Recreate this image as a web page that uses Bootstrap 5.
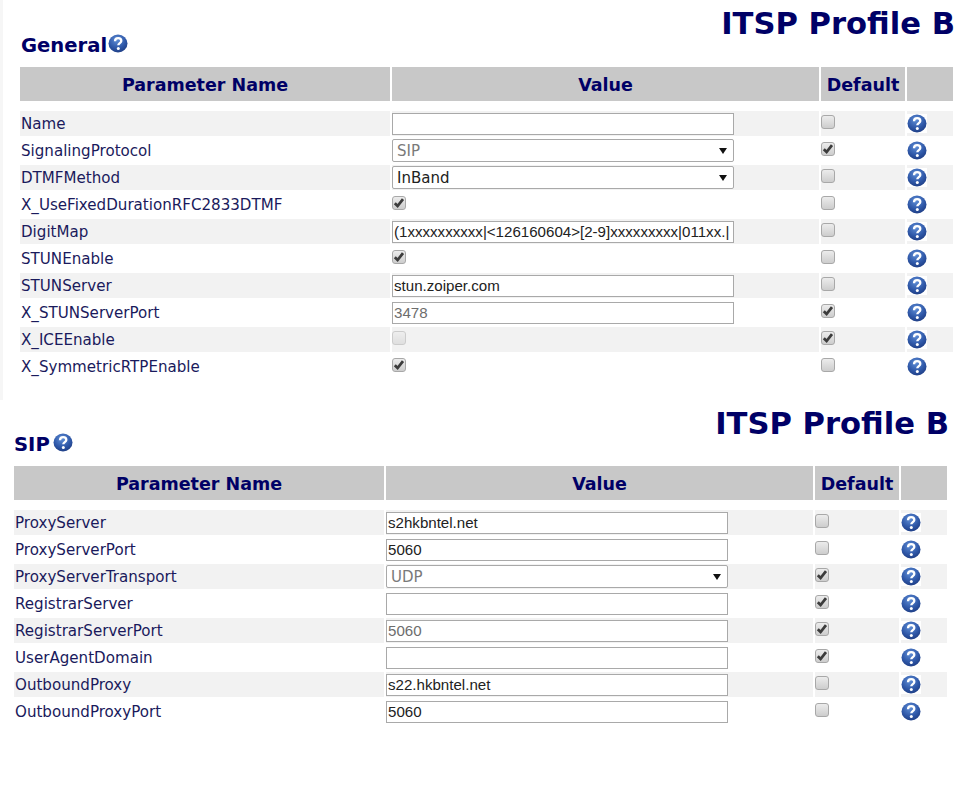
<!DOCTYPE html>
<html lang="en">
<head>
<meta charset="utf-8">
<title>ITSP Profile B</title>
<link href="https://cdn.jsdelivr.net/npm/bootstrap@5.3.0/dist/css/bootstrap.min.css" rel="stylesheet">
<style>
body{background:#fff;font-family:"DejaVu Sans",Verdana,sans-serif;color:#1a1a5c;}
.pane-one{height:400px;width:980px;border-left:3px solid #f6f6f6;padding-left:15px;padding-right:25px;}
.pane-two{width:980px;padding-left:12px;padding-right:31px;}
.pane-title{font-size:30.6px;font-weight:700;line-height:36px;color:#000066;text-align:right;margin:0;white-space:nowrap;padding-top:6px;}
.pane-one .pane-title{height:32px;}
.pane-two .pane-title{height:31px;}
.sect-head{font-size:19.6px;font-weight:700;line-height:24px;color:#000066;margin:0 0 0 3px;height:33px;padding-top:2px;}
.pane-two .sect-head{margin-left:2px;}
.pane-two .sect-head .help-ico{margin-left:3px;}
.param-grid{border-collapse:separate;border-spacing:2px;table-layout:fixed;width:937px;}
.param-grid th{background:#c8c8c8;height:34px;color:#000066;font-size:17.5px;font-weight:700;text-align:center;padding:2px 0 0;white-space:nowrap;}
.param-grid .gap-row td{height:6px;padding:0;background:none;}
.param-grid td{height:25px;padding:0;font-size:15.1px;line-height:25px;white-space:nowrap;vertical-align:middle;}
.param-grid tr.shade td{background:#f2f2f2;}
.param-grid td:first-child{padding:2px 0 0 1px;line-height:23px;}
.val-box.form-control{display:block;width:342px;height:22px;padding:0 1px;font-family:"Liberation Sans",Arial,sans-serif;font-size:15.1px;line-height:20px;color:#222;border:1px solid #a9a9a9;border-radius:0;background:#fff;box-shadow:none;}
.val-box.form-control:disabled{color:#6d6d6d;background:#fff;opacity:1;}
.val-pick.form-select{display:block;width:342px;height:23px;padding:1px 4px 0;font-family:"DejaVu Sans",Verdana,sans-serif;font-size:15px;line-height:20px;color:#222;border:1px solid #a9a9a9;border-radius:2px;background:#fff url("data:image/svg+xml,%3Csvg xmlns='http://www.w3.org/2000/svg' width='8' height='6'%3E%3Cpath d='M0 0h8L4 6z' fill='%23111'/%3E%3C/svg%3E") no-repeat right 6px center/8px 6px;box-shadow:none;}
.val-pick.form-select:disabled{color:#7a7a7a;background-color:#fff;opacity:1;}
.tick.form-check-input{display:block;width:14px;height:14px;margin:0 0 3px 0;border:1px solid #a8a8a8;border-radius:3px;background:linear-gradient(#ececec,#cdcdcd);box-shadow:none;float:none;}
.tick.form-check-input:checked{background:url("data:image/svg+xml,%3Csvg xmlns='http://www.w3.org/2000/svg' width='14' height='14'%3E%3Cpath d='M2.800 7.200l2.800 2.800L11 3.200' fill='none' stroke='%233c3c3c' stroke-width='2.800'/%3E%3C/svg%3E") center/14px no-repeat,linear-gradient(#ececec,#cdcdcd);border-color:#a8a8a8;}
.tick.form-check-input:disabled{opacity:.5;}
.help-ico{display:block;margin-left:0;background:#fff;}
.sect-head .help-ico{display:inline-block;background:none;margin-left:1px;vertical-align:-1px;}
</style>
</head>
<body class="m-0">
<svg width="0" height="0" class="d-block position-absolute">
<defs>
<radialGradient id="hb" cx="45%" cy="30%" r="75%"><stop offset="0" stop-color="#5f8ed6"/><stop offset=".6" stop-color="#2f58a8"/><stop offset="1" stop-color="#1c3a80"/></radialGradient>
<symbol id="q" viewBox="0 0 20 19"><ellipse cx="10" cy="9.500" rx="9.500" ry="9" fill="url(#hb)"/><path d="M7 7.300C7 5.300 8.400 4.200 10.200 4.200S13.300 5.300 13.300 7C13.300 9 10.300 9.300 10.300 11.300" fill="none" stroke="#fff" stroke-width="2.300"/><circle cx="10.300" cy="14.500" r="1.500" fill="#fff"/></symbol>
</defs>
</svg>

<section class="pane-one">
<h1 class="pane-title">ITSP Profile B</h1>
<h2 class="sect-head">General<svg class="help-ico" width="20" height="19"><use href="#q"/></svg></h2>
<table class="param-grid">
<colgroup><col style="width:370px"><col style="width:427px"><col style="width:84px"><col style="width:46px"></colgroup>
<thead><tr><th>Parameter Name</th><th>Value</th><th>Default</th><th></th></tr></thead>
<tbody>
<tr class="gap-row"><td colspan="4"></td></tr>
<tr class="shade"><td>Name</td><td><input class="form-control val-box" value=""></td><td><input type="checkbox" class="form-check-input tick"></td><td><svg class="help-ico" width="20" height="19"><use href="#q"/></svg></td></tr>
<tr><td>SignalingProtocol</td><td><select class="form-select val-pick" disabled><option>SIP</option></select></td><td><input type="checkbox" class="form-check-input tick" checked></td><td><svg class="help-ico" width="20" height="19"><use href="#q"/></svg></td></tr>
<tr class="shade"><td>DTMFMethod</td><td><select class="form-select val-pick"><option>InBand</option></select></td><td><input type="checkbox" class="form-check-input tick"></td><td><svg class="help-ico" width="20" height="19"><use href="#q"/></svg></td></tr>
<tr><td>X_UseFixedDurationRFC2833DTMF</td><td><input type="checkbox" class="form-check-input tick" checked></td><td><input type="checkbox" class="form-check-input tick"></td><td><svg class="help-ico" width="20" height="19"><use href="#q"/></svg></td></tr>
<tr class="shade"><td>DigitMap</td><td><input class="form-control val-box" value="(1xxxxxxxxxx|&lt;126160604&gt;[2-9]xxxxxxxxx|011xx.|"></td><td><input type="checkbox" class="form-check-input tick"></td><td><svg class="help-ico" width="20" height="19"><use href="#q"/></svg></td></tr>
<tr><td>STUNEnable</td><td><input type="checkbox" class="form-check-input tick" checked></td><td><input type="checkbox" class="form-check-input tick"></td><td><svg class="help-ico" width="20" height="19"><use href="#q"/></svg></td></tr>
<tr class="shade"><td>STUNServer</td><td><input class="form-control val-box" value="stun.zoiper.com"></td><td><input type="checkbox" class="form-check-input tick"></td><td><svg class="help-ico" width="20" height="19"><use href="#q"/></svg></td></tr>
<tr><td>X_STUNServerPort</td><td><input class="form-control val-box" value="3478" disabled></td><td><input type="checkbox" class="form-check-input tick" checked></td><td><svg class="help-ico" width="20" height="19"><use href="#q"/></svg></td></tr>
<tr class="shade"><td>X_ICEEnable</td><td><input type="checkbox" class="form-check-input tick" disabled></td><td><input type="checkbox" class="form-check-input tick" checked></td><td><svg class="help-ico" width="20" height="19"><use href="#q"/></svg></td></tr>
<tr><td>X_SymmetricRTPEnable</td><td><input type="checkbox" class="form-check-input tick" checked></td><td><input type="checkbox" class="form-check-input tick"></td><td><svg class="help-ico" width="20" height="19"><use href="#q"/></svg></td></tr>
</tbody>
</table>
</section>

<section class="pane-two">
<h1 class="pane-title">ITSP Profile B</h1>
<h2 class="sect-head">SIP<svg class="help-ico" width="20" height="19"><use href="#q"/></svg></h2>
<table class="param-grid">
<colgroup><col style="width:370px"><col style="width:427px"><col style="width:84px"><col style="width:46px"></colgroup>
<thead><tr><th>Parameter Name</th><th>Value</th><th>Default</th><th></th></tr></thead>
<tbody>
<tr class="gap-row"><td colspan="4"></td></tr>
<tr class="shade"><td>ProxyServer</td><td><input class="form-control val-box" value="s2hkbntel.net"></td><td><input type="checkbox" class="form-check-input tick"></td><td><svg class="help-ico" width="20" height="19"><use href="#q"/></svg></td></tr>
<tr><td>ProxyServerPort</td><td><input class="form-control val-box" value="5060"></td><td><input type="checkbox" class="form-check-input tick"></td><td><svg class="help-ico" width="20" height="19"><use href="#q"/></svg></td></tr>
<tr class="shade"><td>ProxyServerTransport</td><td><select class="form-select val-pick" disabled><option>UDP</option></select></td><td><input type="checkbox" class="form-check-input tick" checked></td><td><svg class="help-ico" width="20" height="19"><use href="#q"/></svg></td></tr>
<tr><td>RegistrarServer</td><td><input class="form-control val-box" value=""></td><td><input type="checkbox" class="form-check-input tick" checked></td><td><svg class="help-ico" width="20" height="19"><use href="#q"/></svg></td></tr>
<tr class="shade"><td>RegistrarServerPort</td><td><input class="form-control val-box" value="5060" disabled></td><td><input type="checkbox" class="form-check-input tick" checked></td><td><svg class="help-ico" width="20" height="19"><use href="#q"/></svg></td></tr>
<tr><td>UserAgentDomain</td><td><input class="form-control val-box" value=""></td><td><input type="checkbox" class="form-check-input tick" checked></td><td><svg class="help-ico" width="20" height="19"><use href="#q"/></svg></td></tr>
<tr class="shade"><td>OutboundProxy</td><td><input class="form-control val-box" value="s22.hkbntel.net"></td><td><input type="checkbox" class="form-check-input tick"></td><td><svg class="help-ico" width="20" height="19"><use href="#q"/></svg></td></tr>
<tr><td>OutboundProxyPort</td><td><input class="form-control val-box" value="5060"></td><td><input type="checkbox" class="form-check-input tick"></td><td><svg class="help-ico" width="20" height="19"><use href="#q"/></svg></td></tr>
</tbody>
</table>
</section>
</body>
</html>
